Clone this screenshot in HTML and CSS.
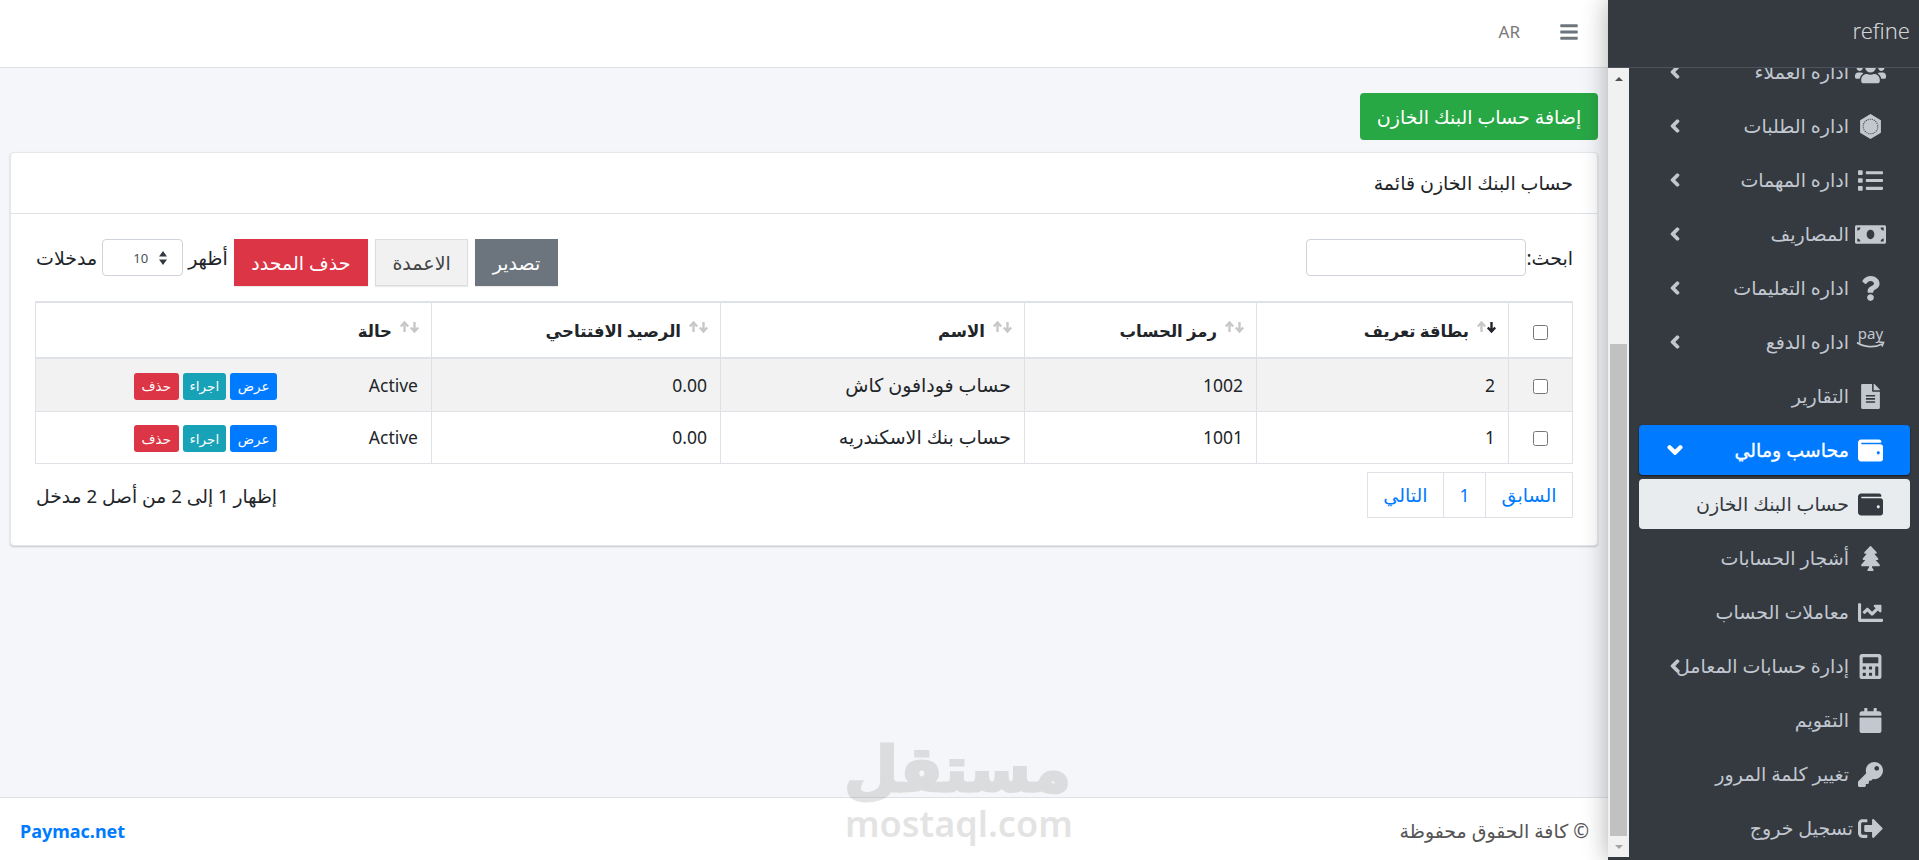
FILE: index.html
```html
<!DOCTYPE html>
<html lang="ar" dir="rtl">
  <head>
    <meta charset="UTF-8" />
    <title>حساب البنك الخازن</title>
    <link rel="stylesheet" href="styles.css">
  </head>
  <body>
    <svg class="defs" width="0" height="0">
      <symbol id="chev-left" viewBox="0 0 320 512"><path d="M34.52 239.03L228.87 44.69c9.37-9.37 24.57-9.37 33.94 0l22.67 22.67c9.36 9.36 9.37 24.52.04 33.9L131.49 256l154.02 154.75c9.34 9.38 9.32 24.54-.04 33.9l-22.67 22.67c-9.37 9.37-24.57 9.37-33.94 0L34.52 272.97c-9.37-9.37-9.37-24.57 0-33.94z"/></symbol>
      <symbol id="wallet" viewBox="0 0 512 512"><path d="M461.2 128H80c-8.84 0-16-7.16-16-16s7.16-16 16-16h384c8.84 0 16-7.16 16-16 0-26.51-21.49-48-48-48H64C28.65 32 0 60.65 0 96v320c0 35.35 28.65 64 64 64h397.2c28.02 0 50.8-21.53 50.8-48V176c0-26.47-22.78-48-50.8-48zM416 336c-17.67 0-32-14.33-32-32s14.33-32 32-32 32 14.33 32 32-14.33 32-32 32z"/></symbol>
      <symbol id="sort-arrows" viewBox="0 0 21 12"><path d="M5.500 11V2M1.800 5.500l3.700-4 3.700 4" fill="none" stroke="#c8c8c8" stroke-width="2.400"/><path d="M15.500 1v9M11.800 6.500l3.700 4 3.700-4" fill="none" stroke="currentColor" stroke-width="2.400"/></symbol>
    </svg>

    <div class="page">
      <aside class="sidebar">
        <div class="brand">refine</div>
        <div class="side-body">
          <nav class="side-nav">
            <a class="nav-item first">
              <svg class="nav-icon wide" viewBox="0 0 640 512"><path d="M96 224c35.3 0 64-28.7 64-64s-28.7-64-64-64-64 28.7-64 64 28.7 64 64 64zm448 0c35.3 0 64-28.7 64-64s-28.7-64-64-64-64 28.7-64 64 28.7 64 64 64zm32 32h-64c-17.6 0-33.5 7.1-45.1 18.6 40.3 22.1 68.9 62 75.1 109.4h66c17.7 0 32-14.3 32-32v-32c0-35.3-28.7-64-64-64zm-256 0c61.9 0 112-50.1 112-112S381.9 32 320 32 208 82.1 208 144s50.1 112 112 112zm76.8 32h-8.3c-20.8 10-43.9 16-68.5 16s-47.6-6-68.5-16h-8.3C179.6 288 128 339.6 128 403.2V432c0 26.5 21.5 48 48 48h288c26.5 0 48-21.5 48-48v-28.8c0-63.6-51.6-115.2-115.2-115.2zm-223.7-13.4C161.5 263.1 145.6 256 128 256H64c-35.3 0-64 28.7-64 64v32c0 17.7 14.3 32 32 32h65.9c6.3-47.4 34.9-87.3 75.2-109.4z"/></svg>
              <span>اداره العملاء</span>
              <svg class="chev"><use href="#chev-left"/></svg>
            </a>
            <a class="nav-item">
              <svg class="nav-icon" viewBox="0 0 24 24"><path d="M12 0l10 6v12l-10 6-10-6V6z"/><circle cx="12" cy="12" r="7" fill="none" stroke="#343a40" stroke-width="1" stroke-dasharray="1 1"/></svg>
              <span>اداره الطلبات</span>
              <svg class="chev"><use href="#chev-left"/></svg>
            </a>
            <a class="nav-item">
              <svg class="nav-icon" viewBox="0 0 512 512"><path d="M80 368H16a16 16 0 0 0-16 16v64a16 16 0 0 0 16 16h64a16 16 0 0 0 16-16v-64a16 16 0 0 0-16-16zm0-320H16A16 16 0 0 0 0 64v64a16 16 0 0 0 16 16h64a16 16 0 0 0 16-16V64a16 16 0 0 0-16-16zm0 160H16a16 16 0 0 0-16 16v64a16 16 0 0 0 16 16h64a16 16 0 0 0 16-16v-64a16 16 0 0 0-16-16zm416 176H176a16 16 0 0 0-16 16v32a16 16 0 0 0 16 16h320a16 16 0 0 0 16-16v-32a16 16 0 0 0-16-16zm0-320H176a16 16 0 0 0-16 16v32a16 16 0 0 0 16 16h320a16 16 0 0 0 16-16V80a16 16 0 0 0-16-16zm0 160H176a16 16 0 0 0-16 16v32a16 16 0 0 0 16 16h320a16 16 0 0 0 16-16v-32a16 16 0 0 0-16-16z"/></svg>
              <span>اداره المهمات</span>
              <svg class="chev"><use href="#chev-left"/></svg>
            </a>
            <a class="nav-item">
              <svg class="nav-icon wide" viewBox="0 0 640 512"><path d="M608 64H32C14.33 64 0 78.33 0 96v320c0 17.67 14.33 32 32 32h576c17.67 0 32-14.33 32-32V96c0-17.67-14.33-32-32-32zM48 400v-64c35.35 0 64 28.65 64 64H48zm0-224v-64h64c0 35.35-28.65 64-64 64zm272 176c-44.19 0-80-42.99-80-96 0-53.02 35.82-96 80-96s80 42.98 80 96c0 53.03-35.83 96-80 96zm272 48h-64c0-35.35 28.65-64 64-64v64zm0-224c-35.35 0-64-28.65-64-64h64v64z"/></svg>
              <span>المصاريف</span>
              <svg class="chev"><use href="#chev-left"/></svg>
            </a>
            <a class="nav-item">
              <svg class="nav-icon" viewBox="0 0 384 512"><path d="M202.021 0C122.202 0 70.503 32.703 29.914 91.026c-7.363 10.58-5.093 25.086 5.178 32.874l43.138 32.709c10.373 7.865 25.132 6.026 33.253-4.148 25.049-31.381 43.63-49.449 82.757-49.449 30.764 0 68.816 19.799 68.816 49.631 0 22.552-18.617 34.134-48.993 51.164-35.423 19.86-82.299 44.576-82.299 106.405V320c0 13.255 10.745 24 24 24h72.471c13.255 0 24-10.745 24-24v-5.773c0-42.86 125.268-44.645 125.268-160.627C377.504 66.256 286.902 0 202.021 0zM192 373.459c-38.196 0-69.271 31.075-69.271 69.271 0 38.195 31.075 69.27 69.271 69.27s69.271-31.075 69.271-69.271-31.075-69.27-69.271-69.27z"/></svg>
              <span>اداره التعليمات</span>
              <svg class="chev"><use href="#chev-left"/></svg>
            </a>
            <a class="nav-item">
              <span class="pay-icon"><span class="pay-word">pay</span><svg viewBox="0 0 30 8"><path d="M1 1.500c7 5 18 5.500 25 1.500M23 1l4.500.5-1.500 4" fill="none" stroke="currentColor" stroke-width="1.700"/></svg></span>
              <span>اداره الدفع</span>
              <svg class="chev"><use href="#chev-left"/></svg>
            </a>
            <a class="nav-item">
              <svg class="nav-icon" viewBox="0 0 384 512"><path d="M224 136V0H24C10.7 0 0 10.7 0 24v464c0 13.3 10.7 24 24 24h336c13.3 0 24-10.7 24-24V160H248c-13.2 0-24-10.800-24-24zm64 236c0 6.600-5.400 12-12 12H108c-6.600 0-12-5.400-12-12v-8c0-6.600 5.400-12 12-12h168c6.600 0 12 5.400 12 12v8zm0-64c0 6.600-5.400 12-12 12H108c-6.600 0-12-5.400-12-12v-8c0-6.600 5.400-12 12-12h168c6.600 0 12 5.400 12 12v8zm0-72v8c0 6.600-5.400 12-12 12H108c-6.600 0-12-5.400-12-12v-8c0-6.600 5.400-12 12-12h168c6.600 0 12 5.400 12 12zm96-114.100v6.100H256V0h6.100c6.400 0 12.500 2.500 17 7l97.900 98c4.500 4.500 7 10.600 7 16.900z"/></svg>
              <span>التقارير</span>
            </a>
            <a class="nav-item active">
              <svg class="nav-icon"><use href="#wallet"/></svg>
              <span>محاسب ومالي</span>
              <svg class="chev down" viewBox="0 0 448 512"><path d="M207.029 381.476L12.686 187.132c-9.373-9.373-9.373-24.569 0-33.941l22.667-22.667c9.357-9.357 24.522-9.375 33.901-.04L224 284.505l154.745-154.021c9.379-9.335 24.544-9.317 33.901.04l22.667 22.667c9.373 9.373 9.373 24.569 0 33.941L240.971 381.476c-9.373 9.372-24.569 9.372-33.942 0z"/></svg>
            </a>
            <a class="nav-item current">
              <svg class="nav-icon"><use href="#wallet"/></svg>
              <span>حساب البنك الخازن</span>
            </a>
            <a class="nav-item">
              <svg class="nav-icon" viewBox="0 0 384 512"><path d="M378.31 378.49L298.42 288h30.63c9.01 0 16.98-5 20.78-13.06 3.8-8.04 2.55-17.26-3.28-24.05L268.42 160h28.89c9.1 0 17.3-5.35 20.86-13.61 3.52-8.13 1.86-17.59-4.24-24.08L203.66 4.83c-6.03-6.45-17.28-6.45-23.32 0L70.06 122.31c-6.1 6.49-7.75 15.95-4.24 24.08C69.38 154.65 77.59 160 86.69 160h28.89l-78.14 90.89c-5.81 6.78-7.06 15.99-3.27 24.04C37.97 283 45.93 288 54.95 288h30.63L5.69 378.49c-6 6.79-7.36 16.09-3.56 24.26 3.75 8.05 12 13.25 21.01 13.25H160v24.45l-30.29 48.4c-5.32 10.64 2.42 23.16 14.31 23.16h95.96c11.89 0 19.63-12.52 14.31-23.16L224 440.45V416h136.86c9.01 0 17.26-5.2 21.01-13.25 3.8-8.17 2.44-17.47-3.56-24.26z"/></svg>
              <span>أشجار الحسابات</span>
            </a>
            <a class="nav-item">
              <svg class="nav-icon" viewBox="0 0 512 512"><path d="M496 384H64V80c0-8.84-7.16-16-16-16H16C7.16 64 0 71.16 0 80v336c0 17.67 14.33 32 32 32h464c8.84 0 16-7.16 16-16v-32c0-8.84-7.16-16-16-16zM464 96H345.94c-21.38 0-32.09 25.85-16.97 40.97l32.4 32.4L288 242.75l-73.37-73.37c-12.5-12.5-32.76-12.5-45.25 0l-68.69 68.69c-6.25 6.25-6.25 16.38 0 22.63l22.62 22.62c6.25 6.25 16.38 6.25 22.63 0L192 237.25l73.37 73.37c12.5 12.5 32.76 12.5 45.25 0l96-96 32.4 32.4c15.12 15.12 40.97 4.41 40.97-16.97V112c.01-8.84-7.15-16-15.99-16z"/></svg>
              <span>معاملات الحساب</span>
            </a>
            <a class="nav-item">
              <svg class="nav-icon" viewBox="0 0 448 512"><path d="M400 0H48C22.4 0 0 22.4 0 48v416c0 25.6 22.4 48 48 48h352c25.6 0 48-22.4 48-48V48c0-25.6-22.4-48-48-48zM128 435c0 6.4-6.4 13-12.8 13H76.8c-6.4 0-12.8-6.6-12.8-13v-38.4c0-6.4 6.4-12.8 12.8-12.8h38.4c6.4 0 12.8 6.4 12.8 12.8V435zm0-128c0 6.4-6.4 12.8-12.8 12.8H76.8c-6.4 0-12.8-6.4-12.8-12.8v-38.4c0-6.4 6.4-12.8 12.8-12.8h38.4c6.4 0 12.8 6.4 12.8 12.8V307zm128 128c0 6.4-6.4 12.8-12.8 12.8h-38.4c-6.4 0-12.8-6.4-12.8-12.8v-38.4c0-6.4 6.4-12.8 12.8-12.8h38.4c6.4 0 12.8 6.4 12.8 12.8V435zm0-128c0 6.4-6.4 12.8-12.8 12.8h-38.4c-6.4 0-12.8-6.4-12.8-12.8v-38.4c0-6.4 6.4-12.8 12.8-12.8h38.4c6.4 0 12.8 6.4 12.8 12.8V307zm128 128c0 6.4-6.4 12.8-12.8 12.8h-38.4c-6.4 0-12.8-6.4-12.8-12.8V268.8c0-6.4 6.4-12.8 12.8-12.8h38.4c6.4 0 12.8 6.4 12.8 12.8V435zm0-256c0 6.4-6.4 12.8-12.8 12.8H76.8c-6.4 0-12.8-6.4-12.8-12.8V76.8C64 70.4 70.4 64 76.8 64h294.4c6.4 0 12.8 6.4 12.8 12.8V179z"/></svg>
              <span>إدارة حسابات المعامل</span>
              <svg class="chev"><use href="#chev-left"/></svg>
            </a>
            <a class="nav-item">
              <svg class="nav-icon" viewBox="0 0 448 512"><path d="M12 192h424c6.6 0 12 5.4 12 12v260c0 26.5-21.5 48-48 48H48c-26.5 0-48-21.5-48-48V204c0-6.6 5.4-12 12-12zm436-44v-36c0-26.5-21.5-48-48-48h-48V12c0-6.6-5.4-12-12-12h-40c-6.6 0-12 5.4-12 12v52H160V12c0-6.6-5.4-12-12-12h-40c-6.6 0-12 5.4-12 12v52H48C21.5 64 0 85.5 0 112v36c0 6.6 5.4 12 12 12h424c6.6 0 12-5.4 12-12z"/></svg>
              <span>التقويم</span>
            </a>
            <a class="nav-item">
              <svg class="nav-icon" viewBox="0 0 512 512"><path d="M512 176.001C512 273.203 433.202 352 336 352c-11.22 0-22.19-1.062-32.827-3.069l-24.012 27.014A23.999 23.999 0 0 1 261.223 384H224v40c0 13.255-10.745 24-24 24h-40v40c0 13.255-10.745 24-24 24H24c-13.255 0-24-10.745-24-24v-78.059c0-6.365 2.529-12.47 7.029-16.971l161.802-161.802C163.108 213.814 160 195.271 160 176 160 78.798 238.797.001 335.999 0 433.488-.001 512 78.511 512 176.001zM336 128c0 26.51 21.49 48 48 48s48-21.49 48-48-21.49-48-48-48-48 21.49-48 48z"/></svg>
              <span>تغيير كلمة المرور</span>
            </a>
            <a class="nav-item tight">
              <svg class="nav-icon" viewBox="0 0 512 512"><path d="M497 273L329 441c-15 15-41 4.5-41-17v-96H152c-13.3 0-24-10.7-24-24v-96c0-13.3 10.7-24 24-24h136V88c0-21.4 25.9-32 41-17l168 168c9.3 9.4 9.3 24.6 0 34zM192 436v-40c0-6.6-5.4-12-12-12H96c-17.7 0-32-14.3-32-32V160c0-17.7 14.3-32 32-32h84c6.6 0 12-5.4 12-12V76c0-6.6-5.4-12-12-12H96c-53 0-96 43-96 96v192c0 53 43 96 96 96h84c6.6 0 12-5.4 12-12z"/></svg>
              <span>تسجيل خروج</span>
            </a>
          </nav>
          <div class="scrollbar">
            <span class="arrow up"></span>
            <div class="track"><div class="thumb"></div></div>
            <span class="arrow dn"></span>
          </div>
        </div>
      </aside>

      <div class="main">
        <header class="topbar">
          <svg class="burger" viewBox="0 0 448 512"><path d="M16 132h416c8.837 0 16-7.163 16-16V76c0-8.837-7.163-16-16-16H16C7.163 60 0 67.163 0 76v40c0 8.837 7.163 16 16 16zm0 160h416c8.837 0 16-7.163 16-16v-40c0-8.837-7.163-16-16-16H16c-8.837 0-16 7.163-16 16v40c0 8.837 7.163 16 16 16zm0 160h416c8.837 0 16-7.163 16-16v-40c0-8.837-7.163-16-16-16H16c-8.837 0-16 7.163-16 16v40c0 8.837 7.163 16 16 16z"/></svg>
          <span class="lang">AR</span>
        </header>

        <div class="content">
          <button class="btn-add">إضافة حساب البنك الخازن</button>
          <section class="card">
            <div class="card-head">حساب البنك الخازن قائمة</div>
            <div class="card-body">
              <div class="tools">
                <label class="search">ابحث:<input type="text"></label>
                <div class="tools-left">
                  <button class="tool grey">تصدير</button>
                  <button class="tool light">الاعمدة</button>
                  <button class="tool red">حذف المحدد</button>
                  <label class="length">أظهر
                    <span class="select">10<svg viewBox="0 0 10 16"><path d="M5 1l4 5.500H1zM5 15L1 9.500h8z"/></svg></span>
                    مدخلات</label>
                </div>
              </div>

              <table class="grid">
                <colgroup>
                  <col class="c1"><col class="c2"><col class="c3"><col class="c4"><col class="c5"><col class="c6">
                </colgroup>
                <thead>
                  <tr>
                    <th class="chk"><input type="checkbox"></th>
                    <th><svg class="sort on"><use href="#sort-arrows"/></svg>بطاقة تعريف</th>
                    <th><svg class="sort"><use href="#sort-arrows"/></svg>رمز الحساب</th>
                    <th><svg class="sort"><use href="#sort-arrows"/></svg>الاسم</th>
                    <th><svg class="sort"><use href="#sort-arrows"/></svg>الرصيد الافتتاحي</th>
                    <th><svg class="sort"><use href="#sort-arrows"/></svg>حالة</th>
                  </tr>
                </thead>
                <tbody>
                  <tr class="odd">
                    <td class="chk"><input type="checkbox"></td>
                    <td class="num">2</td>
                    <td class="num">1002</td>
                    <td>حساب فودافون كاش</td>
                    <td class="num">0.00</td>
                    <td>
                      <div class="status">
                        <span class="state">Active</span>
                        <a class="mini blue">عرض</a><a class="mini teal">اجراء</a><a class="mini red">حذف</a>
                      </div>
                    </td>
                  </tr>
                  <tr>
                    <td class="chk"><input type="checkbox"></td>
                    <td class="num">1</td>
                    <td class="num">1001</td>
                    <td>حساب بنك الاسكندريه</td>
                    <td class="num">0.00</td>
                    <td>
                      <div class="status">
                        <span class="state">Active</span>
                        <a class="mini blue">عرض</a><a class="mini teal">اجراء</a><a class="mini red">حذف</a>
                      </div>
                    </td>
                  </tr>
                </tbody>
              </table>

              <div class="table-foot">
                <ul class="pager">
                  <li>السابق</li>
                  <li class="num">1</li>
                  <li>التالي</li>
                </ul>
                <div class="info">إظهار 1 إلى 2 من أصل 2 مدخل</div>
              </div>
            </div>
          </section>
        </div>

        <footer class="foot">
          <span>© كافة الحقوق محفوظة</span>
          <a class="foot-link">Paymac.net</a>
        </footer>
      </div>
    </div>

    <div class="watermark">
      <div class="wm-ar">مستقل</div>
      <div class="wm-en">mostaql.com</div>
    </div>
  </body>
</html>
```

FILE: styles.css
```css
* {
  box-sizing: border-box;
}
html,
body {
  margin: 0;
  height: 100%;
  overflow: hidden;
}
body {
  font-family: "Noto Sans", "DejaVu Sans", sans-serif;
  font-size: 19px;
  color: #212529;
  background: #f4f6f9;
}
.defs {
  position: absolute;
}
.page {
  display: flex;
  height: 860px;
}
.num {
  font-size: 17.5px;
}

/* sidebar */
.sidebar {
  width: 311px;
  flex: none;
  background: #343a40;
  display: flex;
  flex-direction: column;
  box-shadow: 0 0 24px rgba(0, 0, 0, 0.32);
  z-index: 2;
}
.brand {
  height: 68px;
  flex: none;
  padding: 15px 9px 0 0;
  border-bottom: 1px solid #4b545c;
  color: rgba(255, 255, 255, 0.8);
  font-size: 22px;
  font-weight: 300;
  direction: ltr;
  text-align: right;
}
.side-body {
  flex: 1;
  display: flex;
  min-height: 0;
}
.side-nav {
  flex: 1;
  overflow: hidden;
  padding: 0 9px 0 10px;
}
.scrollbar {
  width: 21px;
  flex: none;
  height: 789px;
  background: #f1f1f1;
  display: flex;
  flex-direction: column;
}
.track {
  flex: 1;
  padding-top: 255px;
}
.thumb {
  height: 100%;
  margin: 0 2px;
  background: #c1c1c1;
}
.arrow {
  height: 21px;
  flex: none;
  display: flex;
  justify-content: center;
  align-items: center;
}
.arrow::before {
  content: "";
  border-left: 4px solid transparent;
  border-right: 4px solid transparent;
}
.arrow.up::before {
  border-bottom: 4px solid #505050;
}
.arrow.dn::before {
  border-top: 4px solid #a3a3a3;
}
.nav-item {
  position: relative;
  display: flex;
  align-items: center;
  gap: 9px;
  height: 50px;
  margin-bottom: 4px;
  padding-right: 27px;
  border-radius: 4px;
  color: #c2c7d0;
  white-space: nowrap;
}
.nav-item.first {
  margin-top: -21px;
}
.nav-item.tight {
  gap: 5px;
}
.nav-icon {
  width: 25px;
  height: 25px;
  fill: currentColor;
  flex: none;
}
.nav-icon.wide {
  width: 31px;
  margin: 0 -3px;
}
.chev {
  position: absolute;
  left: 31px;
  top: 18px;
  width: 10px;
  height: 14px;
  fill: currentColor;
  stroke: currentColor;
  stroke-width: 55px;
  overflow: visible;
}
.chev.down {
  left: 28px;
  width: 16px;
  height: 16px;
  top: 17px;
}
.nav-item.active {
  background: #007bff;
  color: #fff;
  box-shadow: 0 1px 2px rgba(0, 0, 0, 0.6);
  -webkit-text-stroke: 0.3px #fff;
}
.nav-item.current {
  background: #e9ecef;
  color: #343a40;
}
.pay-icon {
  width: 25px;
  height: 24px;
  flex: none;
  display: flex;
  flex-direction: column;
  align-items: center;
  line-height: 14px;
  direction: ltr;
  margin-top: -8px;
}
.pay-word {
  font-size: 15px;
  height: 15px;
}
.pay-icon svg {
  display: block;
  width: 30px;
  height: 8px;
  flex: none;
}

/* main column */
.main {
  flex: 1;
  min-width: 0;
  display: flex;
  flex-direction: column;
}
.topbar {
  height: 68px;
  flex: none;
  background: #fff;
  border-bottom: 1px solid #dee2e6;
  display: flex;
  align-items: center;
  padding: 0 30px 4px 0;
  color: #777;
}
.burger {
  width: 18px;
  height: 20px;
  fill: #6c757d;
}
.lang {
  margin-right: 40px;
  font-size: 17px;
}
.content {
  flex: 1;
  padding: 25px 10px 0;
}
.btn-add {
  display: block;
  height: 47px;
  width: 238px;
  border: 0;
  border-radius: 4px;
  background: #28a745;
  color: #fff;
  font: inherit;
}
.card {
  margin-top: 12px;
  background: #fff;
  border: 1px solid #e4e7ea;
  border-radius: 4px;
  box-shadow: 0 1px 2px rgba(0, 0, 0, 0.2);
  height: 394px;
}
.card-head {
  height: 61px;
  padding: 0 24px;
  display: flex;
  align-items: center;
  border-bottom: 1px solid #dfe2e6;
}
.card-body {
  padding: 25px 24px 0 25px;
}

/* toolbar above the table */
.tools {
  display: flex;
  justify-content: space-between;
  align-items: flex-start;
  height: 62px;
}
.search {
  display: flex;
  align-items: center;
  height: 37px;
}
.search input {
  width: 220px;
  height: 37px;
  margin: 0;
  border: 1px solid #ced4da;
  border-radius: 4px;
  background: #fff;
}
.tools-left {
  display: flex;
  align-items: flex-start;
}
.tool {
  height: 47px;
  padding: 0 16.5px;
  margin-right: 7px;
  border: 1px solid transparent;
  font: inherit;
  box-shadow: 0 1px 1px rgba(0, 0, 0, 0.08);
}
.tool:first-child {
  margin-right: 0;
}
.tool.grey {
  background: #6c757d;
  color: #fff;
}
.tool.light {
  background: #f1f1f1;
  border-color: #ddd;
  color: #444;
}
.tool.red {
  background: #dc3545;
  color: #fff;
}
.length {
  display: flex;
  align-items: center;
  gap: 5px;
  height: 37px;
  margin-right: 6px;
  white-space: nowrap;
}
.select {
  width: 81px;
  height: 37px;
  border: 1px solid #ced4da;
  border-radius: 4px;
  background: #fff;
  direction: ltr;
  display: flex;
  justify-content: flex-end;
  align-items: center;
  gap: 10px;
  padding-right: 14px;
  font-size: 13px;
  color: #495057;
}
.select svg {
  width: 10px;
  height: 16px;
  fill: #343a40;
}

/* table */
.grid {
  width: 1537px;
  border-collapse: collapse;
  table-layout: fixed;
  border: 1px solid #dee2e6;
}
.c1 { width: 64px; }
.c2 { width: 252px; }
.c3 { width: 232px; }
.c4 { width: 304px; }
.c5 { width: 289px; }
.c6 { width: 396px; }
.grid th,
.grid td {
  border: 1px solid #dee2e6;
  padding: 0 13px;
  text-align: right;
}
.grid thead th {
  height: 56px;
  padding-right: 11px;
  border-top-width: 2px;
  border-bottom-width: 2px;
  font-size: 16.5px;
  font-weight: 700;
}
.grid tbody td {
  height: 52px;
}
.grid tbody tr.odd td {
  height: 53px;
  background: #f2f2f2;
}
.grid .chk {
  text-align: center;
  padding: 0;
}
.chk input {
  margin: 0;
  width: 15px;
  height: 15px;
  vertical-align: middle;
}
.sort {
  width: 21px;
  height: 12px;
  margin-left: 7px;
  color: #c8c8c8;
  vertical-align: 4px;
}
.sort.on {
  color: #212529;
}
.status {
  display: flex;
  align-items: center;
  gap: 4px;
}
.state {
  width: 137px;
  font-size: 17.5px;
}
.mini {
  height: 27px;
  margin-top: 3px;
  padding: 0 7.5px;
  display: flex;
  align-items: center;
  border-radius: 3px;
  color: #fff;
  font-size: 13.5px;
}
.mini.blue { background: #007bff; }
.mini.teal { background: #17a2b8; padding: 0 7px; }
.mini.red { background: #dc3545; }

/* under the table */
.table-foot {
  display: flex;
  justify-content: space-between;
  margin-top: 8px;
}
.pager {
  list-style: none;
  margin: 0;
  padding: 0;
  display: flex;
  height: 46px;
  color: #007bff;
  border: 1px solid #dee2e6;
}
.pager li {
  display: flex;
  align-items: center;
  padding: 0 15.5px;
  border-left: 1px solid #dee2e6;
}
.pager li:last-child {
  border-left: 0;
}
.info {
  padding-top: 11px;
  font-size: 18.7px;
}

/* footer */
.foot {
  height: 63px;
  flex: none;
  background: #fff;
  border-top: 1px solid #dee2e6;
  display: flex;
  justify-content: space-between;
  align-items: center;
  padding: 3px 19px 0 20px;
  color: #555;
}
.foot-link {
  color: #007bff;
  font-weight: 700;
  font-size: 18px;
}

/* site mark laid over the page */
.watermark {
  position: absolute;
  left: 845px;
  top: 727px;
  width: 226px;
  text-align: center;
  color: #787878;
  opacity: 0.2;
  pointer-events: none;
  z-index: 3;
}
.wm-ar {
  padding-left: 7px;
  font-size: 62px;
  font-weight: 700;
  line-height: 80px;
  -webkit-text-stroke: 3px #787878;
}
.wm-en {
  font-size: 36px;
  font-weight: 600;
  line-height: 34px;
  direction: ltr;
}
```
